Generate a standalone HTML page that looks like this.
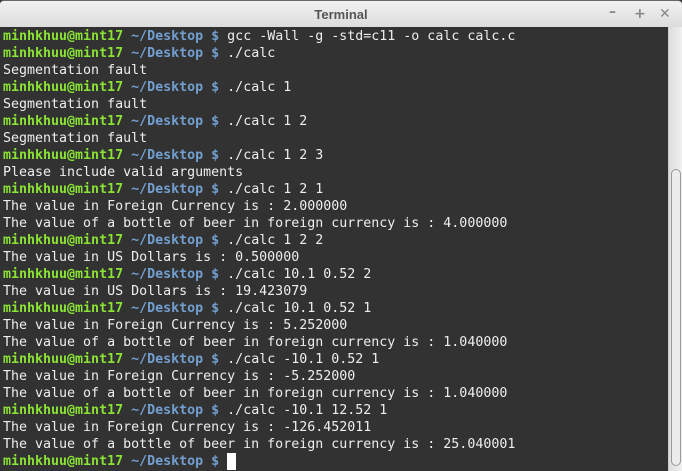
<!DOCTYPE html>
<html><head><meta charset="utf-8"><style>
html,body{margin:0;padding:0;width:682px;height:471px;overflow:hidden;background:#333;}
#title{position:absolute;left:0;top:0;width:682px;height:27px;background:linear-gradient(#f2f2f2,#dcdcdc);border-top:1px solid #666;box-sizing:border-box;border-radius:4px 4px 0 0;}
#title .t{position:absolute;left:0;width:682px;top:6px;text-align:center;font:bold 13px "Liberation Sans",sans-serif;color:#555;}
.btn{position:absolute;top:5px;font:bold 14px "DejaVu Sans",sans-serif;color:#888;}
#term{position:absolute;left:0;top:27px;width:668px;height:444px;background:#323232;}
pre{margin:0;position:absolute;left:3px;top:1px;font-family:"DejaVu Sans Mono","Liberation Mono",monospace;font-size:13.3px;line-height:17px;color:#eee;}
.g{color:#8ae234;font-weight:bold}.b{color:#729fcf;font-weight:bold}
.cur{display:inline-block;width:9px;height:17px;background:#fff;vertical-align:top}
#sb{position:absolute;left:668px;top:27px;width:14px;height:444px;background:linear-gradient(90deg,#ddd,#f0f0f0);border-left:1px solid #ccc;box-sizing:border-box}
#thumb{position:absolute;left:2px;top:142px;width:10px;height:297px;background:#ececec;border:1px solid #999;border-radius:5px;box-sizing:border-box}
</style></head><body>
<div id="title"><div class="t">Terminal</div>
<div class="btn" style="left:609px;top:3px">–</div><div class="btn" style="left:634px">+</div><div class="btn" style="left:659px">✕</div></div>
<div id="term"><pre><span class="g">minhkhuu@mint17</span> <span class="b">~/Desktop $</span> gcc -Wall -g -std=c11 -o calc calc.c
<span class="g">minhkhuu@mint17</span> <span class="b">~/Desktop $</span> ./calc
Segmentation fault
<span class="g">minhkhuu@mint17</span> <span class="b">~/Desktop $</span> ./calc 1
Segmentation fault
<span class="g">minhkhuu@mint17</span> <span class="b">~/Desktop $</span> ./calc 1 2
Segmentation fault
<span class="g">minhkhuu@mint17</span> <span class="b">~/Desktop $</span> ./calc 1 2 3
Please include valid arguments
<span class="g">minhkhuu@mint17</span> <span class="b">~/Desktop $</span> ./calc 1 2 1
The value in Foreign Currency is : 2.000000
The value of a bottle of beer in foreign currency is : 4.000000
<span class="g">minhkhuu@mint17</span> <span class="b">~/Desktop $</span> ./calc 1 2 2
The value in US Dollars is : 0.500000
<span class="g">minhkhuu@mint17</span> <span class="b">~/Desktop $</span> ./calc 10.1 0.52 2
The value in US Dollars is : 19.423079
<span class="g">minhkhuu@mint17</span> <span class="b">~/Desktop $</span> ./calc 10.1 0.52 1
The value in Foreign Currency is : 5.252000
The value of a bottle of beer in foreign currency is : 1.040000
<span class="g">minhkhuu@mint17</span> <span class="b">~/Desktop $</span> ./calc -10.1 0.52 1
The value in Foreign Currency is : -5.252000
The value of a bottle of beer in foreign currency is : 1.040000
<span class="g">minhkhuu@mint17</span> <span class="b">~/Desktop $</span> ./calc -10.1 12.52 1
The value in Foreign Currency is : -126.452011
The value of a bottle of beer in foreign currency is : 25.040001
<span class="g">minhkhuu@mint17</span> <span class="b">~/Desktop $</span> <span class="cur"></span></pre></div>
<div id="sb"><div id="thumb"></div></div>
</body></html>
